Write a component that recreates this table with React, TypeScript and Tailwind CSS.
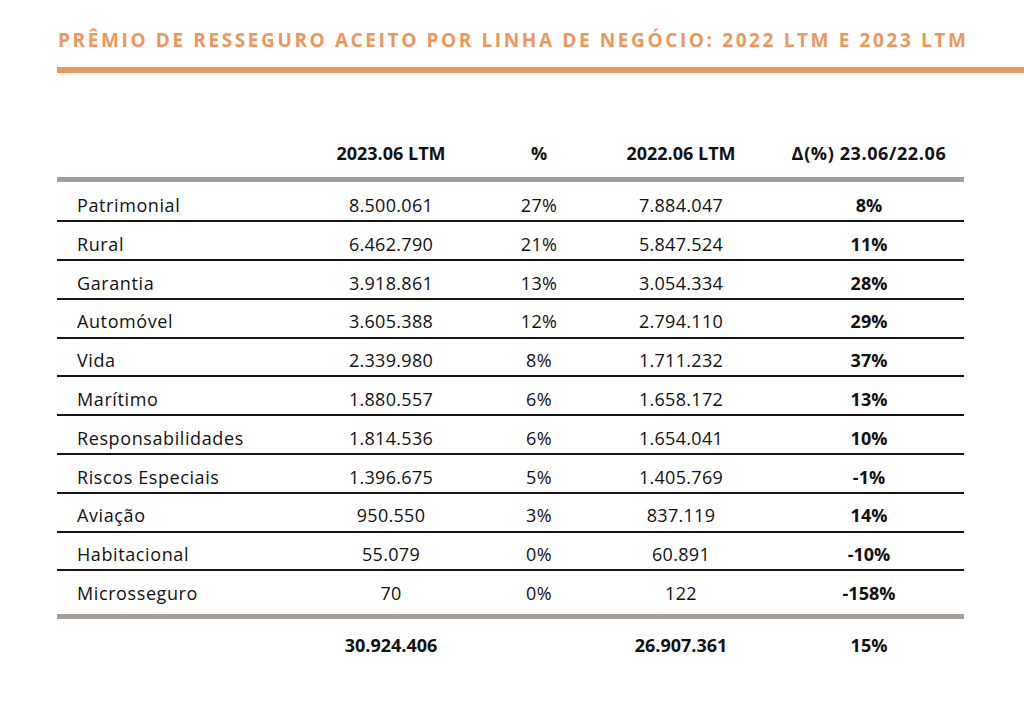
import React from "react";

const rows: [string, string, string, string, string][] = [
  ["Patrimonial", "8.500.061", "27%", "7.884.047", "8%"],
  ["Rural", "6.462.790", "21%", "5.847.524", "11%"],
  ["Garantia", "3.918.861", "13%", "3.054.334", "28%"],
  ["Automóvel", "3.605.388", "12%", "2.794.110", "29%"],
  ["Vida", "2.339.980", "8%", "1.711.232", "37%"],
  ["Marítimo", "1.880.557", "6%", "1.658.172", "13%"],
  ["Responsabilidades", "1.814.536", "6%", "1.654.041", "10%"],
  ["Riscos Especiais", "1.396.675", "5%", "1.405.769", "-1%"],
  ["Aviação", "950.550", "3%", "837.119", "14%"],
  ["Habitacional", "55.079", "0%", "60.891", "-10%"],
  ["Microsseguro", "70", "0%", "122", "-158%"],
];

const grid = "grid grid-cols-[254px_160px_136px_148px_209px]";

export default function App() {
  return (
    <div
      className="w-[1024px] h-[705px] bg-white overflow-hidden text-[#111111]"
      style={{ fontFamily: '"Open Sans", "Liberation Sans", sans-serif' }}
    >
      <div className="pl-[58px] pt-[27.5px] text-[19px] leading-[24px] font-bold tracking-[2.62px] text-[#ef965c] whitespace-nowrap">
        PRÊMIO DE RESSEGURO ACEITO POR LINHA DE NEGÓCIO: 2022 LTM E 2023 LTM
      </div>
      <div className="ml-[57px] mt-[15.5px] h-[6px] bg-[#ef965c]" />

      <div className="ml-[57px] w-[907px] mt-[68px]">
        <div className={`${grid} text-[18px] leading-[24px] font-bold`}>
          <div />
          <div className="text-center">2023.06 LTM</div>
          <div className="text-center">%</div>
          <div className="text-center">2022.06 LTM</div>
          <div className="text-center pl-[19px] tracking-[0.6px]">∆(%) 23.06/22.06</div>
        </div>
        <div className="mt-[12px] h-[5px] bg-[#a39e99] mb-[1.5px]" />
        {rows.map((r, i) => {
          const last = i === rows.length - 1;
          return (
            <div
              key={r[0]}
              className={`${grid} text-[18px] leading-[24px] ${
                last ? "h-[43px]" : "h-[38.8px] border-b-2 border-[#141414]"
              } pt-[9.5px]`}
            >
              <div className="pl-[20px] tracking-[0.6px]">{r[0]}</div>
              <div className="text-center tracking-[0.3px]">{r[1]}</div>
              <div className="text-center tracking-[0.3px]">{r[2]}</div>
              <div className="text-center tracking-[0.3px]">{r[3]}</div>
              <div className="text-center pl-[19px] font-bold">{r[4]}</div>
            </div>
          );
        })}
        <div className="h-[5px] bg-[#a39e99]" />
        <div className={`${grid} text-[18px] leading-[24px] font-bold pt-[13.5px]`}>
          <div />
          <div className="text-center">30.924.406</div>
          <div />
          <div className="text-center">26.907.361</div>
          <div className="text-center pl-[19px]">15%</div>
        </div>
      </div>
    </div>
  );
}
